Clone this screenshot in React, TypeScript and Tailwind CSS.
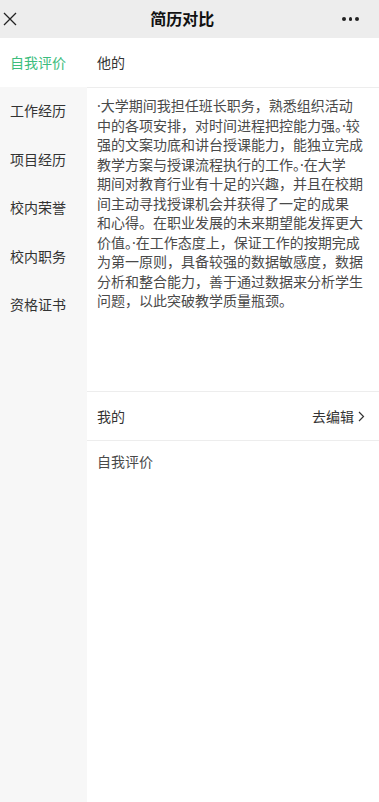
import React from 'react';

const navItems = ['自我评价', '工作经历', '项目经历', '校内荣誉', '校内职务', '资格证书'];

const theirLines = [
  '·大学期间我担任班长职务，熟悉组织活动',
  '中的各项安排，对时间进程把控能力强。·较',
  '强的文案功底和讲台授课能力，能独立完成',
  '教学方案与授课流程执行的工作。·在大学',
  '期间对教育行业有十足的兴趣，并且在校期',
  '间主动寻找授课机会并获得了一定的成果',
  '和心得。在职业发展的未来期望能发挥更大',
  '价值。·在工作态度上，保证工作的按期完成',
  '为第一原则，具备较强的数据敏感度，数据',
  '分析和整合能力，善于通过数据来分析学生',
  '问题，以此突破教学质量瓶颈。',
];

const font = { fontFamily: '"Noto Sans", "Noto Sans CJK SC", sans-serif' };

const App = () => {
  const active = '自我评价';

  return (
    <div className="w-[379px] min-h-[802px] flex flex-col bg-white" style={font}>
      {/* Header */}
      <div className="h-[38px] bg-[#ededed] flex items-center justify-between px-[3px] shrink-0">
        <svg width="14" height="14" viewBox="0 0 14 14">
          <path d="M1 1 L13 13 M13 1 L1 13" stroke="#222" strokeWidth="1.3" fill="none" />
        </svg>
        <div className="text-[16px] font-bold text-[#111] ml-[5px] leading-none">简历对比</div>
        <div className="flex items-center gap-[3px] mr-[17px]">
          <span className="w-[3.5px] h-[3.5px] rounded-full bg-[#222]" />
          <span className="w-[3.5px] h-[3.5px] rounded-full bg-[#222]" />
          <span className="w-[3.5px] h-[3.5px] rounded-full bg-[#222]" />
        </div>
      </div>

      <div className="flex flex-1">
        {/* Sidebar */}
        <div className="w-[87px] bg-[#f7f7f7] shrink-0 flex flex-col">
          {navItems.map(item => (
            <div
              key={item}
              className={`h-[48.5px] flex items-center pl-[10px] text-[14px] ${
                item === active ? 'bg-white text-[#3dbd7d]' : 'text-[#333]'
              }`}
            >
              {item}
            </div>
          ))}
        </div>

        {/* Content */}
        <div className="flex-1 flex flex-col">
          <div className="h-[50px] flex items-center px-[10px] border-b border-[#ededed] text-[14px] text-[#333]">
            他的
          </div>
          <div className="h-[303px] pt-[8px] px-[10px] text-[14px] leading-[19.5px] text-[#4a4a4a]">
            {theirLines.map(line => (
              <div key={line} className="whitespace-nowrap">{line}</div>
            ))}
          </div>
          <div className="h-[50px] flex items-center justify-between pl-[10px] pr-[14px] border-t border-b border-[#ededed] text-[14px] text-[#333]">
            <span>我的</span>
            <span className="flex items-center gap-[4px]">
              去编辑
              <svg width="7" height="11" viewBox="0 0 7 11">
                <path d="M1 1 L5.5 5.5 L1 10" stroke="#333" strokeWidth="1.2" fill="none" />
              </svg>
            </span>
          </div>
          <div className="pt-[11px] px-[10px] text-[14px] leading-[19.5px] text-[#4a4a4a]">
            自我评价
          </div>
        </div>
      </div>
    </div>
  );
};

export default App;
